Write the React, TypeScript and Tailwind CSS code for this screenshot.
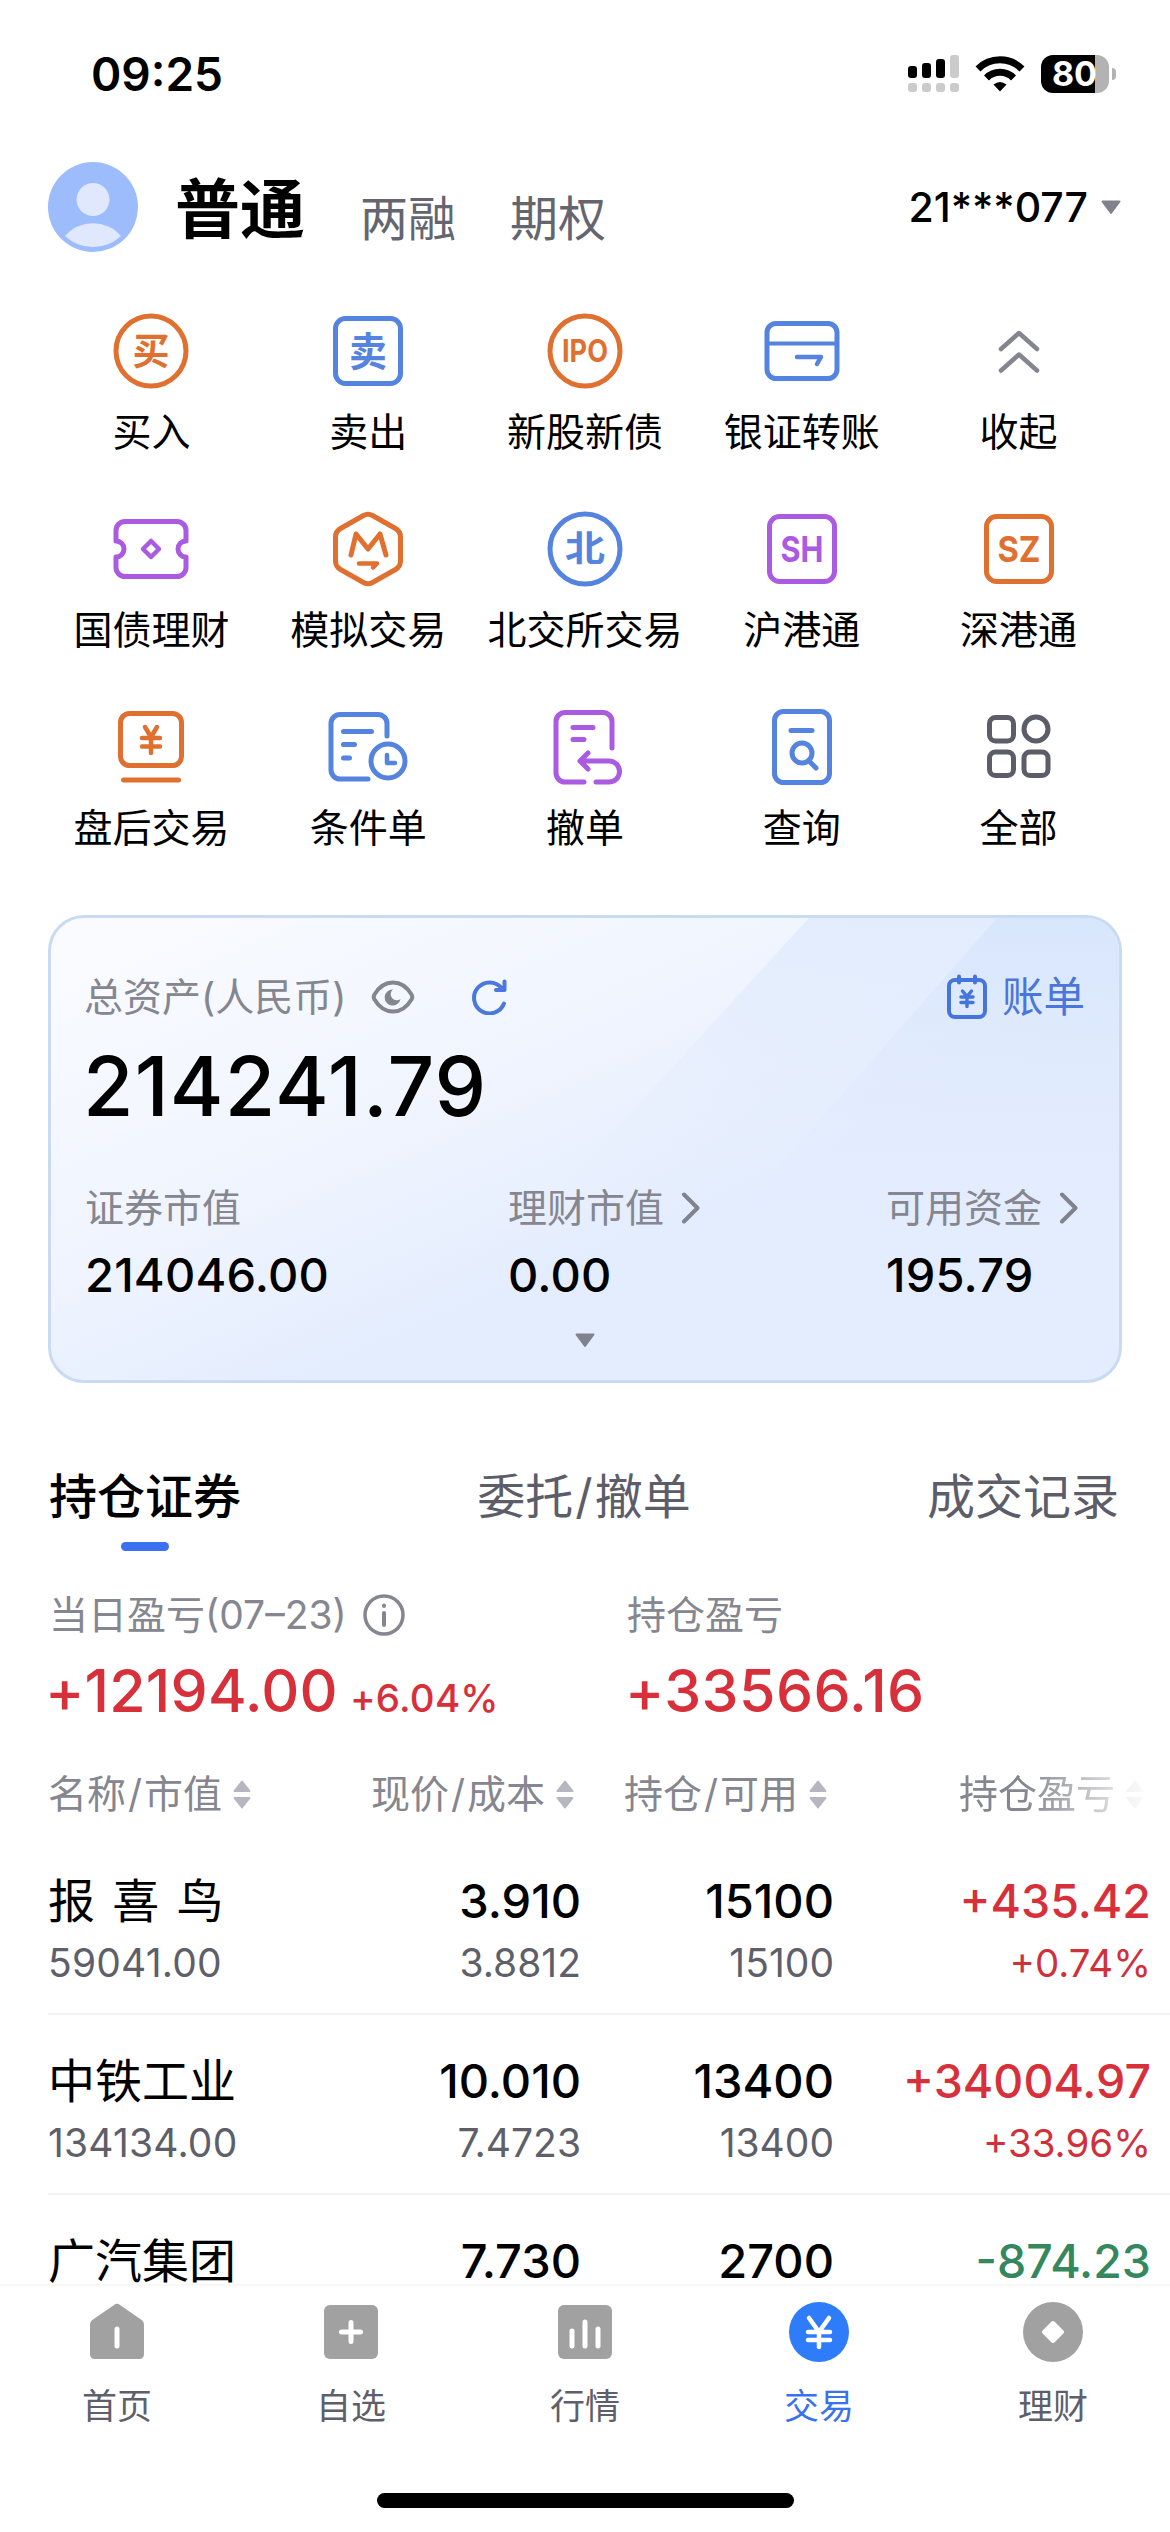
import type {ReactNode} from "react";
import clsx from "clsx";

const ORANGE = "#e0702f";
const BLUE = "#5583e0";
const PURPLE = "#ab5ae2";

type IconProps = {
    color?: string;
    children: ReactNode;
}

// 80x80 canvas shared by all the shortcut icons
const Icon = ({color = ORANGE, children}: IconProps) => (
    <svg viewBox="0 0 80 80" className="h-20 w-20" fill="none" stroke={color} strokeWidth="5"
         strokeLinecap="round" strokeLinejoin="round">
        {children}
    </svg>
)

type GlyphProps = {
    x?: number;
    y: number;
    size: number;
    width: number;
    color: string;
    children: string;
}

const Glyph = ({x = 40, y, size, width, color, children}: GlyphProps) => (
    <text x={x} y={y} fontSize={size} textAnchor="middle" textLength={width} lengthAdjust="spacingAndGlyphs"
          fill={color} stroke="none" className="font-bold">{children}</text>
)

const SHORTCUTS = [
    {
        label: "买入",
        icon: <Icon><circle cx="40" cy="40" r="35"/><Glyph y={54} size={37} width={37} color={ORANGE}>买</Glyph></Icon>
    },
    {
        label: "卖出",
        icon: <Icon color={BLUE}><rect x="7.5" y="7.5" width="65" height="65" rx="10"/><Glyph y={55} size={40} width={38} color={BLUE}>卖</Glyph></Icon>
    },
    {
        label: "新股新债",
        icon: <Icon><circle cx="40" cy="40" r="35"/><Glyph y={51} size={31} width={46} color={ORANGE}>IPO</Glyph></Icon>
    },
    {
        label: "银证转账",
        icon: <Icon color={BLUE}>
            <rect x="5" y="12.5" width="70" height="55" rx="9"/>
            <path d="M5 32.5h70" strokeWidth="4"/>
            <path d="M35 46h24l-4 7" strokeWidth="4.5"/>
        </Icon>
    },
    {
        label: "收起",
        icon: <Icon color="#85858f"><path d="M22 38l18-16 18 16M22 59.500l18-16 18 16" strokeWidth="4.500"/></Icon>
    },
    {
        label: "国债理财",
        icon: <Icon color={PURPLE}>
            <path d="M14 12.500h52a9 9 0 0 1 9 9v10.500a8 8 0 0 0 0 16v10.500a9 9 0 0 1-9 9H14a9 9 0 0 1-9-9V48a8 8 0 0 0 0-16V21.500a9 9 0 0 1 9-9z"/>
            <path d="M40 32l8 8-8 8-8-8z" strokeWidth="4.500"/>
        </Icon>
    },
    {
        label: "模拟交易",
        icon: <Icon>
            <path d="M35.500 6.500q4.500-2.500 9 0l23 13q5 3 5 8.500v24q0 5.500-5 8.500l-23 13q-4.500 2.500-9 0l-23-13q-5-3-5-8.500V28q0-5.500 5-8.500z"/>
            <path d="M23 46l5-21 12 15 12-15 6 21"/>
            <path d="M31 54.500h18l-4 4" strokeWidth="4.500"/>
        </Icon>
    },
    {
        label: "北交所交易",
        icon: <Icon color={BLUE}><circle cx="40" cy="40" r="35"/><Glyph y={52} size={35} width={40} color={BLUE}>北</Glyph></Icon>
    },
    {
        label: "沪港通",
        icon: <Icon color={PURPLE}><rect x="7.500" y="7.500" width="65" height="65" rx="10"/><Glyph y={53} size={36} width={43} color={PURPLE}>SH</Glyph></Icon>
    },
    {
        label: "深港通",
        icon: <Icon><rect x="7.500" y="7.500" width="65" height="65" rx="10"/><Glyph y={53} size={36} width={43} color={ORANGE}>SZ</Glyph></Icon>
    },
    {
        label: "盘后交易",
        icon: <Icon>
            <rect x="9.500" y="6.500" width="61" height="52" rx="9"/>
            <path d="M12.500 73h55"/>
            <path d="M34 20l6 10 6-10M40 30v16M31 31h18M31 39.500h18" strokeWidth="4.500"/>
        </Icon>
    },
    {
        label: "条件单",
        icon: <Icon color={BLUE}>
            <path d="M40 72H12a9 9 0 0 1-9-9V16.500a9 9 0 0 1 9-9h38a9 9 0 0 1 9 9V29"/>
            <path d="M15.500 24.500h28M15.500 37.500h11M15.500 51h6"/>
            <circle cx="60" cy="54" r="17"/>
            <path d="M59 48v8h8" strokeWidth="4.500"/>
        </Icon>
    },
    {
        label: "撤单",
        icon: <Icon color={PURPLE}>
            <path d="M39 75H20a9 9 0 0 1-9-9V14.500a9 9 0 0 1 9-9h38a9 9 0 0 1 9 9V41"/>
            <path d="M28 20.500h20M28 32.500h11"/>
            <path d="M51 75h13a10.500 10.500 0 0 0 0-21H36M43 46l-8 8 8 8"/>
        </Icon>
    },
    {
        label: "查询",
        icon: <Icon color={BLUE}>
            <rect x="12.500" y="4.500" width="55" height="71" rx="9"/>
            <path d="M29 23.500h21"/>
            <circle cx="40" cy="46" r="10"/>
            <path d="M47 54l7 7"/>
        </Icon>
    },
    {
        label: "全部",
        icon: <Icon color="#5c5d69">
            <rect x="10.500" y="10.500" width="24" height="23.500" rx="6"/>
            <circle cx="57" cy="22" r="12"/>
            <rect x="10.500" y="45" width="24" height="23.500" rx="6"/>
            <rect x="45" y="45" width="24" height="23.500" rx="6"/>
        </Icon>
    }
]

const ASSETS = [
    {label: "证券市值", value: "214046.00", link: false},
    {label: "理财市值", value: "0.00", link: true},
    {label: "可用资金", value: "195.79", link: true}
]

const HOLDINGS = [
    {name: "报 喜 鸟", market: "59041.00", price: "3.910", cost: "3.8812", total: "15100", available: "15100", profit: "+435.42", rate: "+0.74%"},
    {name: "中铁工业", market: "134134.00", price: "10.010", cost: "7.4723", total: "13400", available: "13400", profit: "+34004.97", rate: "+33.96%"},
    {name: "广汽集团", market: "", price: "7.730", cost: "", total: "2700", available: "", profit: "-874.23", rate: ""}
]

const NAV = [
    {
        label: "首页",
        icon: <>
            <path d="M27 3q3-2.500 6 0l21 14.500q3 2 3 5.500v29q0 5-5 5H8q-5 0-5-5V23q0-3.500 3-5.500z" fill="#a1a1a1"/>
            <path d="M30 27v17" stroke="#fff" strokeWidth="5"/>
        </>
    },
    {
        label: "自选",
        icon: <>
            <rect x="3" y="3" width="54" height="54" rx="6" fill="#a1a1a1"/>
            <path d="M30 20.500v19M20.500 30h19" stroke="#fff" strokeWidth="5"/>
        </>
    },
    {
        label: "行情",
        icon: <>
            <rect x="3" y="3" width="54" height="54" rx="6" fill="#a1a1a1"/>
            <path d="M17 29v15M30 20v24M43 27v17" stroke="#fff" strokeWidth="5"/>
        </>
    },
    {
        label: "交易",
        active: true,
        icon: <>
            <circle cx="30" cy="30" r="30" fill="#2f7cfb"/>
            <path d="M20 16l10 14 10-14M30 30v15M19 30h22M19 38h22" stroke="#fff" strokeWidth="4.500"/>
        </>
    },
    {
        label: "理财",
        icon: <>
            <circle cx="30" cy="30" r="30" fill="#a1a1a1"/>
            <path d="M30 21l9 9-9 9-9-9z" fill="#fff" stroke="#fff" strokeWidth="4"/>
        </>
    }
]

const Triangle = () => (
    <svg viewBox="0 0 20 15" className="h-[15px] w-5" fill="#82828d" stroke="#82828d" strokeWidth="2" strokeLinejoin="round">
        <path d="M1.500 1.500h17L10 13z"/>
    </svg>
)

const Sort = () => (
    <svg viewBox="0 0 18 29" className="h-[29px] w-[18px]" fill="#b5b6c0" stroke="#b5b6c0" strokeWidth="2" strokeLinejoin="round">
        <path d="M1.500 11L9 1.500 16.500 11zM1.500 18L9 27.500 16.500 18z"/>
    </svg>
)

const StatusBar = () => (
    <div className="flex h-[148px] shrink-0 items-center justify-between pr-[54px] pl-[91px]">
        <span className="text-[46px] font-semibold">09:25</span>
        <div className="flex items-center">
            <svg viewBox="0 0 51 38" className="h-[38px] w-[51px]" fill="#cbcbcb">
                <rect x="0" y="11" width="9" height="12" rx="3" fill="#000"/>
                <rect x="14" y="8" width="9" height="15" rx="3" fill="#000"/>
                <rect x="28" y="4" width="9" height="19" rx="3" fill="#000"/>
                <rect x="42" y="0" width="9" height="23" rx="3"/>
                <rect x="0" y="28" width="9" height="9" rx="3"/>
                <rect x="14" y="28" width="9" height="9" rx="3"/>
                <rect x="28" y="28" width="9" height="9" rx="3"/>
                <rect x="42" y="28" width="9" height="9" rx="3"/>
            </svg>
            <svg viewBox="0 0 50 36" className="ml-4 h-9 w-[50px]" fill="none" stroke="#000" strokeWidth="7">
                <path d="M3 13a31 31 0 0 1 44 0"/>
                <path d="M11.500 22a19 19 0 0 1 27 0"/>
                <path d="M18.500 28.500q6.500-5 13 0L25 35.500z" fill="#000" stroke="none"/>
            </svg>
            <div className="ml-4 flex h-[38px] w-[68px] items-center justify-center rounded-[12px] bg-linear-to-r from-black from-80% to-[#b3b3b3] to-80% pr-px text-[34px] leading-none font-bold text-white">80</div>
            <div className="ml-[3px] h-3 w-1 rounded-r-full bg-[#b3b3b3]"/>
        </div>
    </div>
)

const Header = () => (
    <div className="flex h-[118px] shrink-0 items-center pr-[49px] pl-12">
        <svg viewBox="0 0 90 90" className="h-[90px] w-[90px]">
            <circle cx="45" cy="45" r="45" fill="#9cbcfb"/>
            <circle cx="45" cy="37.500" r="16.500" fill="#dfe8fd"/>
            <path d="M17 74a37 37 0 0 1 56 0 41 41 0 0 1-56 0z" fill="#dfe8fd"/>
        </svg>
        <div className="ml-[37px] flex items-end pt-[5px]">
            <span className="text-[65px] leading-[80px] font-bold">普通</span>
            <span className="ml-[55px] text-[48px] leading-[62px] text-[#65656f]">两融</span>
            <span className="ml-[54px] text-[48px] leading-[62px] text-[#65656f]">期权</span>
        </div>
        <span className="mt-[2px] mr-[13px] ml-auto text-[41px] font-medium">21***077</span>
        <Triangle/>
    </div>
)

const AssetCard = () => (
    <section className="relative mx-12 mt-[59px] h-[468px] shrink-0 overflow-hidden rounded-[36px] border-[3px] border-[#c8dbf2] bg-linear-to-br from-[#f9fbff] from-5% via-[#eff4fe] via-40% to-[#e4edfe] to-62%">
        {/* light bands falling from the top right corner */}
        <svg viewBox="0 0 1068 462" className="absolute inset-0 h-full w-full">
            <defs>
                <linearGradient id="wide-band" x1="0" y1="0" x2="0" y2="1">
                    <stop offset="0" stopColor="#e0ebfd" stopOpacity="0.900"/>
                    <stop offset="0.600" stopColor="#e3ecfd" stopOpacity="0"/>
                </linearGradient>
                <linearGradient id="narrow-band" x1="0" y1="0" x2="0" y2="1">
                    <stop offset="0" stopColor="#d5e4fc" stopOpacity="0.750"/>
                    <stop offset="0.650" stopColor="#e0eafd" stopOpacity="0"/>
                </linearGradient>
            </defs>
            <path d="M758 0h310v462H335z" fill="url(#wide-band)"/>
            <path d="M946 0h122v462H540z" fill="url(#narrow-band)"/>
        </svg>
        <div className="relative flex h-full flex-col pt-[49px]">
            <div className="flex h-[60px] items-center pr-[34px] pl-[33px]">
                <span className="text-[39px] text-[#85868f]">总资产(人民币)</span>
                <svg viewBox="0 0 44 34" className="ml-[25px] h-[34px] w-11" fill="none" stroke="#84858e" strokeWidth="4">
                    <path d="M3.500 14.500C13-1.500 31-1.500 40.500 14.500q1.500 2.500 0 5C31 35.500 13 35.500 3.500 19.500q-1.500-2.500 0-5z"/>
                    <path d="M22 9.500a8 8 0 1 0 7.500 9.500 6 6 0 0 1-7.500-9.500z" fill="#84858e" stroke="none"/>
                </svg>
                <svg viewBox="0 0 36 36" className="ml-[56px] h-9 w-9" fill="none" stroke="#4a78df" strokeWidth="4" strokeLinecap="round" strokeLinejoin="round">
                    <path d="M33 24.500A15.500 15.500 0 1 1 30.500 9M33.500 2.500v8.500H25"/>
                </svg>
                <svg viewBox="0 0 42 46" className="ml-auto h-[46px] w-[42px]" fill="none" stroke="#4574dd" strokeWidth="4" strokeLinecap="round" strokeLinejoin="round">
                    <rect x="3" y="6" width="36" height="37" rx="6"/>
                    <path d="M13 2.500v6M29 2.500v6"/>
                    <path d="M16.500 17l4.500 5.500 4.500-5.500M21 22.500v10M15 23h12M15 28.500h12" strokeWidth="3.500"/>
                </svg>
                <span className="ml-[14px] text-[41.500px] text-[#4a76da]">账单</span>
            </div>
            <div className="mt-[15px] pl-[32px] text-[82px] leading-[90px] font-medium tracking-[1.1px]">214241.79</div>
            <div className="mt-[48px] grid grid-cols-[423px_378px_1fr] pl-[34px]">
                {ASSETS.map((asset) => {
                    return <div key={asset.label}>
                        <div className="flex h-14 items-center text-[39px] text-[#85868f]">
                            {asset.label}
                            {asset.link && <svg viewBox="0 0 20 32" className="ml-[17px] h-8 w-5" fill="none" stroke="#7f828f"
                                                strokeWidth="4" strokeLinecap="round" strokeLinejoin="round">
                                <path d="M3 2.500L16.500 16 3 29.500"/>
                            </svg>}
                        </div>
                        <div className="mt-[9px] text-[47px] leading-[60px] font-medium tracking-[0.2px]">{asset.value}</div>
                    </div>
                })}
            </div>
            <div className="mt-[28px] flex justify-center"><Triangle/></div>
        </div>
    </section>
)

const Tabs = () => (
    <div className="mt-[79px] flex h-[89px] shrink-0 justify-between pr-[51px] pl-[49px] text-[48px] leading-[70px] text-[#5d5d69]">
        <div className="flex flex-col items-center font-medium text-black">
            持仓证券
            <div className="mt-[10px] h-[9px] w-12 rounded-full bg-[#3c70f2]"/>
        </div>
        <div>委托<span className="mx-[2px]">/</span>撤单</div>
        <div>成交记录</div>
    </div>
)

const Summary = () => (
    <div className="mt-[36px] grid shrink-0 grid-cols-[578px_1fr] pl-[49px] text-[#d8303b]">
        <div>
            <div className="flex h-14 items-center text-[39px] text-[#85868f]">
                当日盈亏(07–23)
                <svg viewBox="0 0 42 42" className="ml-[16px] h-[42px] w-[42px]" fill="none" stroke="#85868f" strokeWidth="3.500" strokeLinecap="round">
                    <circle cx="21" cy="21" r="19"/>
                    <path d="M21 19v12M21 11.500v.5" strokeWidth="4"/>
                </svg>
            </div>
            <div className="-ml-1 mt-[12px] h-[72px] text-[59px] leading-[72px] font-medium tracking-[0.2px]">
                +12194.00<span className="ml-[12px] text-[38.500px] leading-none">+6.04%</span>
            </div>
        </div>
        <div>
            <div className="flex h-14 items-center text-[39px] text-[#85868f]">持仓盈亏</div>
            <div className="-ml-[2px] mt-[12px] h-[72px] text-[59px] leading-[72px] font-medium tracking-[0.4px]">+33566.16</div>
        </div>
    </div>
)

const COLUMNS = [
    ["名称", "市值"],
    ["现价", "成本"],
    ["持仓", "可用"],
    ["持仓盈亏"]
]

const Holdings = () => (
    <div className="mt-[39px] flex min-h-0 flex-1 flex-col overflow-hidden">
        <div className="grid shrink-0 grid-cols-[283px_250px_253px_317px] pl-12 text-[39px] leading-[56px] text-[#85868f]">
            {COLUMNS.map(([first, second], index) => {
                return <div key={index}
                            className={clsx("flex items-center gap-[11px]", index > 0 && "justify-end pr-[7px]",
                                index === 3 && "mask-r-from-60% mask-r-to-100%")}>
                    <span>{first}{second && <><span className="mx-[2px]">/</span>{second}</>}</span>
                    <Sort/>
                </div>
            })}
        </div>
        <div className="mt-[13px]">
            {HOLDINGS.map((row) => {
                return <div key={row.name}
                            className="ml-12 grid h-[180px] grid-cols-[283px_250px_253px_317px] grid-rows-[60px_50px] gap-y-[7px] border-b-2 border-[#f3f3f6] pt-9 text-right text-[47px] leading-[60px]">
                    <div className="text-left [word-spacing:4px]">{row.name}</div>
                    <div className="font-medium">{row.price}</div>
                    <div className="font-medium">{row.total}</div>
                    <div className={clsx("text-[46.500px] font-medium", row.profit.startsWith("-") ? "text-[#35875d]" : "text-[#d8303b]")}>{row.profit}</div>
                    <div className="text-left text-[39px] leading-[50px] tracking-[0.2px] text-[#5e5f69]">{row.market}</div>
                    <div className="text-[39px] leading-[50px] text-[#5e5f69]">{row.cost}</div>
                    <div className="text-[39px] leading-[50px] text-[#5e5f69]">{row.available}</div>
                    <div className="text-[38.500px] leading-[50px] text-[#d0303c]">{row.rate}</div>
                </div>
            })}
        </div>
    </div>
)

const BottomNav = () => (
    <nav className="flex h-[248px] shrink-0 flex-col items-center border-t-2 border-[#f8f8f9] bg-white">
        <ul className="grid w-full grid-cols-5 pt-4">
            {NAV.map((item) => {
                return <li key={item.label} className="flex flex-col items-center">
                    <svg viewBox="0 0 60 60" className="h-[60px] w-[60px]" fill="none" strokeLinecap="round" strokeLinejoin="round">
                        {item.icon}
                    </svg>
                    <span className={clsx("mt-5 text-[35px] leading-[48px]", item.active ? "text-[#3a72ee]" : "text-[#5e5f6a]")}>{item.label}</span>
                </li>
            })}
        </ul>
        <div className="mt-[63px] h-[15px] w-[417px] rounded-full bg-black"/>
    </nav>
)

const App = () => {

    return (
        <div className="flex h-[2532px] w-[1170px] flex-col overflow-hidden bg-white font-['Inter','Noto_Sans_CJK_SC',sans-serif] text-black">
            <StatusBar/>
            <Header/>
            <ul className="mx-[43px] mt-[45px] grid shrink-0 grid-cols-5 gap-y-[49px]">
                {SHORTCUTS.map((shortcut) => {
                    return <li key={shortcut.label} className="flex flex-col items-center whitespace-nowrap">
                        {shortcut.icon}
                        <span className="mt-[13px] text-[39px] leading-[56px]">{shortcut.label}</span>
                    </li>
                })}
            </ul>
            <AssetCard/>
            <Tabs/>
            <Summary/>
            <Holdings/>
            <BottomNav/>
        </div>
    )
}

export default App;
